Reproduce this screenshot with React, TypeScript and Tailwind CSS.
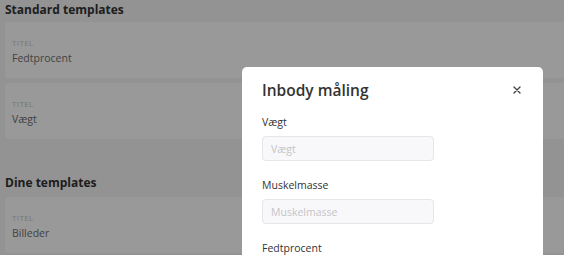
import React from "react"

const font = { fontFamily: '"Open Sans", "Noto Sans", sans-serif' }

function TemplateCard({ title }: { title: string }) {
  return (
    <div className="bg-white rounded-[3px] pl-[7px] pt-[16px] pb-[12px]">
      <div className="text-[8px] leading-[10px] tracking-[0.4px] uppercase text-[#c8c8c8]">Titel</div>
      <div className="text-[10.5px] leading-[16px] text-[#6e6e6e] mt-[2px]">{title}</div>
    </div>
  )
}

function Field({ label }: { label: string }) {
  return (
    <div>
      <label className="block text-[10.5px] leading-[14px] text-[#333]">{label}</label>
      <input
        placeholder={label}
        className="mt-[7px] w-[172px] h-[25px] rounded-[4px] border border-[#e6e6ea] bg-[#f8f8fa] px-[8px] text-[10.5px] placeholder:text-[#c4c4c8] outline-none"
      />
    </div>
  )
}

export default function App() {
  return (
    <div className="relative h-[255px] w-[564px] overflow-hidden bg-[#f5f5f5]" style={font}>
      <div className="pl-[5px] pt-[1px]">
        <h2 className="text-[12px] leading-[18px] font-bold text-[#333]">Standard templates</h2>
        <div className="mt-[3px] flex flex-col gap-[5px] w-[600px]">
          <TemplateCard title="Fedtprocent" />
          <TemplateCard title="Vægt" />
        </div>
        <h2 className="mt-[35px] text-[12px] leading-[18px] font-bold text-[#333]">Dine templates</h2>
        <div className="mt-[5px] flex flex-col gap-[5px] w-[600px]">
          <TemplateCard title="Billeder" />
        </div>
      </div>

      {/* overlay */}
      <div className="absolute inset-0 bg-black/40" />

      {/* modal */}
      <div className="absolute left-[242px] top-[67px] w-[301px] h-[220px] bg-white rounded-[5px] pl-[20px] pr-[20px] pt-[12px]">
        <div className="flex items-center justify-between">
          <h3 className="text-[15.5px] leading-[22px] font-semibold text-[#333]">Inbody måling</h3>
          <button className="text-[#444] mr-[2px]">
            <svg width="8" height="8" viewBox="0 0 8 8" fill="none" stroke="currentColor" strokeWidth="1.4" strokeLinecap="round">
              <path d="M1 1L7 7M7 1L1 7" />
            </svg>
          </button>
        </div>
        <div className="mt-[14px] flex flex-col gap-[17px]">
          <Field label="Vægt" />
          <Field label="Muskelmasse" />
          <Field label="Fedtprocent" />
        </div>
      </div>
    </div>
  )
}
